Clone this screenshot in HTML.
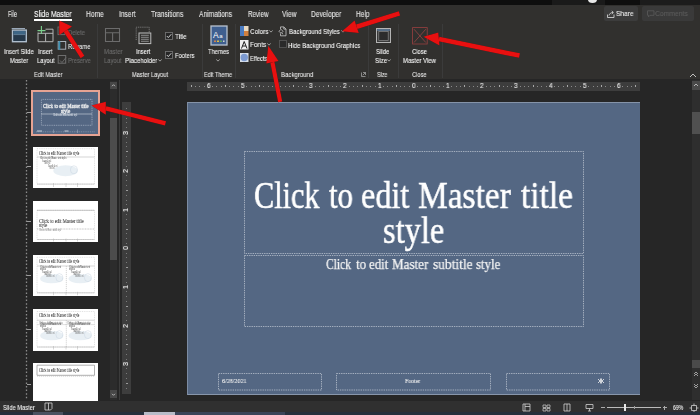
<!DOCTYPE html>
<html><head><meta charset="utf-8">
<style>
*{margin:0;padding:0;box-sizing:border-box}
html,body{width:700px;height:415px;overflow:hidden;background:#262626;position:relative;font-family:"Liberation Sans",sans-serif}
.a{position:absolute}
.t{position:absolute;white-space:nowrap;transform-origin:0 0;-webkit-text-stroke:0.12px currentColor;will-change:transform}
svg{position:absolute;overflow:visible}
.n{-webkit-text-stroke:0}
.sep{position:absolute;top:24px;width:1px;height:54px;background:#3b3b3b}
</style></head><body>
<div class="a" style="left:0;top:0;width:700px;height:5px;background:#0e0e0e"></div>
<div class="a" style="left:552px;top:0;width:53px;height:5px;background:#1a1a1a"></div>
<div class="a" style="left:640px;top:0;width:60px;height:5px;background:#1c1c1c"></div>
<div class="a" style="left:588px;top:-4px;width:9px;height:7px;border-radius:50%;background:#e8e8e8"></div>
<div class="a" style="left:0;top:5px;width:700px;height:74px;background:#31302e"></div>
<div class="a" style="left:34px;top:19.3px;width:38px;height:1.8px;background:#fff"></div>
<div class="a" style="left:603.6px;top:6px;width:34.8px;height:15px;background:#3c3c3c;border-radius:2px"></div>
<div class="a" style="left:642px;top:6px;width:51.6px;height:15px;background:#3a3a3a;border-radius:2px"></div>
<svg style="left:607px;top:10px" width="8" height="8" viewBox="0 0 8 8"><path d="M0.5 4.5v3h6.5v-3M2 5.5c0.5-2 2-3 4-3M4.8 1l1.6 1.5-1.6 1.5" fill="none" stroke="#e0e0e0" stroke-width="0.8"/></svg>
<svg style="left:647px;top:10px" width="8" height="8" viewBox="0 0 8 8"><path d="M0.5 0.8h6.5v4.5h-4l-1.5 1.5v-1.5h-1z" fill="none" stroke="#5a5a5a" stroke-width="0.8"/></svg>
<div class="sep" style="left:97px"></div>
<div class="sep" style="left:202px"></div>
<div class="sep" style="left:235px"></div>
<div class="sep" style="left:368px"></div>
<div class="sep" style="left:398px"></div>
<div class="sep" style="left:442px"></div>
<svg style="left:11px;top:27px" width="17" height="16" viewBox="0 0 17 16"><line x1="0.7" y1="1.5" x2="14" y2="1.5" stroke="#9aa8b8" stroke-width="1"/><rect x="1.5" y="3.1" width="13.8" height="11.6" fill="#25384a" stroke="#aebdcc" stroke-width="1.4"/><rect x="2.5" y="4" width="11.8" height="3.5" fill="#3e6686"/><line x1="2.5" y1="7.6" x2="14.3" y2="7.6" stroke="#7f9ab0" stroke-width="0.6"/></svg>
<svg style="left:36px;top:25px" width="19" height="18" viewBox="0 0 19 18"><path d="M9.5 4.2H17V16.7H2V7.5M2 8.3H17M9.6 8.3V16.7" fill="none" stroke="#b4b4b4" stroke-width="1"/><path d="M5.4 1v8.1M1.5 5.6h8" stroke="#7ccf8c" stroke-width="1.1"/></svg>
<svg style="left:57px;top:26px" width="10" height="10" viewBox="0 0 10 10"><rect x="1" y="1" width="7" height="7.6" fill="none" stroke="#6a6a6a" stroke-width="1"/></svg>
<svg style="left:57px;top:40px" width="11" height="11" viewBox="0 0 11 11"><rect x="1.2" y="1.5" width="7.5" height="7.7" fill="none" stroke="#a8b0b8" stroke-width="1"/><path d="M2.4 1.2v8.5" stroke="#3b8fb0" stroke-width="1.8"/></svg>
<svg style="left:57px;top:54px" width="11" height="11" viewBox="0 0 11 11"><rect x="1.2" y="1.5" width="7.5" height="7.7" fill="none" stroke="#6e6e6e" stroke-width="1"/><path d="M3 6.5l2 2 4-5" fill="none" stroke="#6e6e6e" stroke-width="0.9"/></svg>
<svg style="left:104px;top:27px" width="17" height="16" viewBox="0 0 17 16"><path d="M1.5 1.5H15.5V14.5H1.5ZM1.5 5.8H15.5M8.6 5.8V14.5" fill="none" stroke="#6c6c6c" stroke-width="1.1"/></svg>
<svg style="left:135px;top:26px" width="17" height="19" viewBox="0 0 17 19"><path d="M1.2 14V1.2H14.2V6.5" fill="none" stroke="#8c8c8c" stroke-width="0.8" stroke-dasharray="1.2 0.9"/><rect x="4" y="7" width="11.8" height="10.6" fill="#31302e" stroke="#bdbdbd" stroke-width="1"/><path d="M6 9.3h7.8M6 11.3h7.8M6 13.3h7.8M6 15.3h7.8" stroke="#8a8a8a" stroke-width="1"/></svg>
<svg style="left:164.5px;top:32.2px" width="8" height="8" viewBox="0 0 8 8"><rect x="0.5" y="0.5" width="7" height="7" fill="#262626" stroke="#707070" stroke-width="0.9"/><path d="M1.8 4l1.5 1.6 3-3.4" fill="none" stroke="#e0e0e0" stroke-width="0.9"/></svg>
<svg style="left:164.5px;top:51px" width="8" height="8" viewBox="0 0 8 8"><rect x="0.5" y="0.5" width="7" height="7" fill="#262626" stroke="#707070" stroke-width="0.9"/><path d="M1.8 4l1.5 1.6 3-3.4" fill="none" stroke="#e0e0e0" stroke-width="0.9"/></svg>
<svg style="left:158px;top:59.2px" width="4" height="3" viewBox="0 0 4 3"><path d="M0.3 0.5l1.7 1.6 1.7-1.6" fill="none" stroke="#d0d0d0" stroke-width="0.7"/></svg>
<svg style="left:209.5px;top:25px" width="18" height="21" viewBox="0 0 18 21"><rect x="1" y="1" width="16" height="19" fill="#3f5f8f" stroke="#b9c3cf" stroke-width="1.3"/><text x="3" y="13" font-family="Liberation Sans" font-size="8.5" fill="#ffffff">A</text><text x="9.2" y="13" font-family="Liberation Sans" font-size="6" fill="#ffffff">a</text><rect x="4" y="15.5" width="2" height="1.5" fill="#d08050"/><rect x="7" y="15.5" width="2" height="1.5" fill="#e0c040"/><rect x="10" y="15.5" width="2" height="1.5" fill="#60a060"/><rect x="13" y="15.5" width="1.5" height="1.5" fill="#d0d0d0"/></svg>
<svg style="left:216px;top:59px" width="4" height="3" viewBox="0 0 4 3"><path d="M0.3 0.5l1.7 1.6 1.7-1.6" fill="none" stroke="#d0d0d0" stroke-width="0.7"/></svg>
<svg style="left:240px;top:26px" width="9" height="10" viewBox="0 0 9 10"><rect x="0" y="0" width="4" height="10" fill="#4a7ac0"/><rect x="4" y="0" width="4.5" height="5" fill="#e8d8c0"/><rect x="4" y="5" width="4.5" height="5" fill="#d08040"/></svg>
<svg style="left:269px;top:30.3px" width="4" height="3" viewBox="0 0 4 3"><path d="M0.3 0.5l1.7 1.6 1.7-1.6" fill="none" stroke="#d0d0d0" stroke-width="0.7"/></svg>
<svg style="left:240px;top:39.5px" width="9" height="10" viewBox="0 0 9 10"><rect x="0" y="0" width="8.5" height="9.5" fill="#f0f0f0"/><path d="M1.5 8.5L4.2 1.5L7 8.5M2.6 6h3.3" fill="none" stroke="#202020" stroke-width="1"/></svg>
<svg style="left:267px;top:43.3px" width="4" height="3" viewBox="0 0 4 3"><path d="M0.3 0.5l1.7 1.6 1.7-1.6" fill="none" stroke="#d0d0d0" stroke-width="0.7"/></svg>
<svg style="left:240px;top:53px" width="9" height="10" viewBox="0 0 9 10"><rect x="0" y="0" width="8.5" height="9" fill="#d8e0ea"/><circle cx="4.25" cy="4.5" r="3.7" fill="#7c9ad0"/></svg>
<svg style="left:278px;top:25.5px" width="9" height="11" viewBox="0 0 9 11"><path d="M2.5 3V0.9H5.8L8 3.1V9.8H2.5V7.5M5.8 0.9V3.1H8" fill="none" stroke="#c8c8c8" stroke-width="0.8"/><path d="M1 5.3l2-2 2 2-2 2z" fill="none" stroke="#c8c8c8" stroke-width="0.8"/><path d="M4.2 6.8l0.6 1.5" stroke="#c8c8c8" stroke-width="0.7"/></svg>
<svg style="left:340.5px;top:30.3px" width="4" height="3" viewBox="0 0 4 3"><path d="M0.3 0.5l1.7 1.6 1.7-1.6" fill="none" stroke="#d0d0d0" stroke-width="0.7"/></svg>
<svg style="left:278.5px;top:40px" width="8" height="8" viewBox="0 0 8 8"><rect x="0.5" y="0.5" width="7" height="7" fill="#2a2a2a" stroke="#555555" stroke-width="0.9"/></svg>
<svg style="left:361px;top:71.5px" width="5" height="5" viewBox="0 0 5 5"><path d="M0.5 0.5v4h4M2 0.5h2.5v2.5M1.8 3.2l2.7-2.7" fill="none" stroke="#b0b0b0" stroke-width="0.7"/></svg>
<svg style="left:375px;top:27px" width="17" height="17" viewBox="0 0 17 17"><rect x="1.5" y="1.5" width="14" height="14" fill="#3a3a3a" stroke="#b4b4b4" stroke-width="1"/><rect x="2.2" y="2.2" width="12.6" height="1.6" fill="#5f7c9a"/><rect x="3.8" y="4.5" width="9.4" height="9" fill="#2c2c2c" stroke="#8c8c8c" stroke-width="0.7"/></svg>
<svg style="left:386.5px;top:59px" width="4" height="3" viewBox="0 0 4 3"><path d="M0.3 0.5l1.7 1.6 1.7-1.6" fill="none" stroke="#d0d0d0" stroke-width="0.7"/></svg>
<svg style="left:411.5px;top:26.5px" width="16" height="18" viewBox="0 0 16 18"><rect x="0.6" y="0.6" width="14.6" height="16.4" fill="none" stroke="#9a4040" stroke-width="0.8"/><path d="M2 2.2L13.8 15.5M13.8 2.2L2 15.5" stroke="#a84848" stroke-width="0.7"/></svg>
<svg style="left:689px;top:73px" width="8" height="5" viewBox="0 0 8 5"><path d="M1 4l3-3 3 3" fill="none" stroke="#d0d0d0" stroke-width="0.9"/></svg>
<svg style="left:24px;top:80px" width="4" height="320" viewBox="0 0 4 320"><line x1="2.5" y1="0" x2="2.5" y2="320" stroke="#8c8c8c" stroke-width="1.3" stroke-dasharray="1.5 2.1"/></svg>
<div class="a" style="left:27px;top:112.0px;width:4px;height:1px;background:#9a9a9a"></div>
<div class="a" style="left:27px;top:166.3px;width:4px;height:1px;background:#9a9a9a"></div>
<div class="a" style="left:27px;top:220.5px;width:4px;height:1px;background:#9a9a9a"></div>
<div class="a" style="left:27px;top:274.9px;width:4px;height:1px;background:#9a9a9a"></div>
<div class="a" style="left:27px;top:328.5px;width:4px;height:1px;background:#9a9a9a"></div>
<div class="a" style="left:27px;top:383.5px;width:4px;height:1px;background:#9a9a9a"></div>
<div class="a" style="left:31px;top:89.8px;width:69px;height:45.9px;background:#e6a393"></div>
<div class="a" style="left:33.2px;top:92px;width:65.3px;height:41.9px;background:#546783"></div>
<svg style="left:0;top:0" width="1" height="1"><rect x="41.4" y="99.4" width="50.6" height="25.89999999999999" fill="none" stroke="#c0cad8" stroke-width="0.6" stroke-dasharray="1 0.8"/></svg>
<svg style="left:0;top:0" width="1" height="1"><line x1="41.4" y1="114" x2="92" y2="114" stroke="#dde3ea" stroke-width="0.9" stroke-dasharray="1.2 0.8"/></svg>
<svg style="left:0;top:0" width="1" height="1"><line x1="36" y1="131.8" x2="95" y2="131.8" stroke="#aab6c6" stroke-width="0.5" stroke-dasharray="1 0.8"/></svg>
<svg style="left:0;top:0" width="1" height="1"><line x1="53.5" y1="129.5" x2="53.5" y2="133" stroke="#aab6c6" stroke-width="0.5"/></svg>
<svg style="left:0;top:0" width="1" height="1"><line x1="77.5" y1="129.5" x2="77.5" y2="133" stroke="#aab6c6" stroke-width="0.5"/></svg>
<svg style="left:0;top:0" width="1" height="1"><line x1="37" y1="131" x2="42" y2="131" stroke="#e0e6ee" stroke-width="0.8"/></svg>
<svg style="left:0;top:0" width="1" height="1"><line x1="64.5" y1="131" x2="68.5" y2="131" stroke="#e0e6ee" stroke-width="0.8"/></svg>
<div class="a" style="left:33px;top:146.5px;width:65px;height:41.19999999999999px;background:#ffffff"></div>
<div class="a" style="left:33px;top:200.9px;width:65px;height:41.099999999999994px;background:#ffffff"></div>
<div class="a" style="left:33px;top:254.8px;width:65px;height:41.599999999999966px;background:#ffffff"></div>
<div class="a" style="left:33px;top:309px;width:65px;height:41.60000000000002px;background:#ffffff"></div>
<div class="a" style="left:33px;top:363.3px;width:65px;height:40.69999999999999px;background:#ffffff"></div>
<svg style="left:0;top:0" width="1" height="1"><rect x="37" y="148.7" width="57.5" height="35.400000000000006" fill="none" stroke="#c4c4c4" stroke-width="0.5" stroke-dasharray="1 0.8"/></svg>
<svg style="left:0;top:0" width="1" height="1"><line x1="37" y1="157" x2="94.5" y2="157" stroke="#a8a8a8" stroke-width="0.5"/></svg>
<svg style="left:0;top:0" width="1" height="1"><ellipse cx="65.6" cy="170.75" rx="12.300000000000004" ry="5.449999999999989" fill="#e6edf3" opacity="0.9"/><ellipse cx="73.9" cy="169.75" rx="3.5" ry="4" fill="none" stroke="#c8d4e0" stroke-width="0.5"/></svg>
<svg style="left:0;top:0" width="1" height="1"><line x1="37" y1="184.1" x2="94.5" y2="184.1" stroke="#a8a8a8" stroke-width="0.5"/></svg>
<svg style="left:0;top:0" width="1" height="1"><line x1="53.5" y1="183" x2="53.5" y2="187" stroke="#b0b0b0" stroke-width="0.5"/></svg>
<svg style="left:0;top:0" width="1" height="1"><line x1="66" y1="183" x2="66" y2="187" stroke="#b0b0b0" stroke-width="0.5"/></svg>
<svg style="left:0;top:0" width="1" height="1"><line x1="77.5" y1="183" x2="77.5" y2="187" stroke="#b0b0b0" stroke-width="0.5"/></svg>
<svg style="left:0;top:0" width="1" height="1"><rect x="37" y="210.3" width="57.5" height="29.19999999999999" fill="none" stroke="#c4c4c4" stroke-width="0.5" stroke-dasharray="1 0.8"/></svg>
<svg style="left:0;top:0" width="1" height="1"><line x1="37" y1="210.3" x2="94.5" y2="210.3" stroke="#909090" stroke-width="0.5"/></svg>
<svg style="left:0;top:0" width="1" height="1"><line x1="37" y1="229" x2="94.5" y2="229" stroke="#8a8a8a" stroke-width="0.5" stroke-dasharray="1 0.6"/></svg>
<svg style="left:0;top:0" width="1" height="1"><line x1="37" y1="239.5" x2="94.5" y2="239.5" stroke="#a8a8a8" stroke-width="0.5"/></svg>
<svg style="left:0;top:0" width="1" height="1"><line x1="53.5" y1="238.5" x2="53.5" y2="241.5" stroke="#b0b0b0" stroke-width="0.5"/></svg>
<svg style="left:0;top:0" width="1" height="1"><line x1="66" y1="238.5" x2="66" y2="241.5" stroke="#b0b0b0" stroke-width="0.5"/></svg>
<svg style="left:0;top:0" width="1" height="1"><line x1="77.5" y1="238.5" x2="77.5" y2="241.5" stroke="#b0b0b0" stroke-width="0.5"/></svg>
<svg style="left:0;top:0" width="1" height="1"><rect x="37" y="257.3" width="57.5" height="35.5" fill="none" stroke="#c4c4c4" stroke-width="0.5" stroke-dasharray="1 0.8"/></svg>
<svg style="left:0;top:0" width="1" height="1"><line x1="37" y1="266.0" x2="94.5" y2="266.0" stroke="#a8a8a8" stroke-width="0.5"/></svg>
<svg style="left:0;top:0" width="1" height="1"><line x1="66.3" y1="266.0" x2="66.3" y2="292.8" stroke="#a8a8a8" stroke-width="0.5" stroke-dasharray="1.2 0.8"/></svg>
<svg style="left:0;top:0" width="1" height="1"><ellipse cx="51.7" cy="278.65" rx="11.7" ry="4.650000000000006" fill="#e6edf3" opacity="0.9"/><ellipse cx="59.4" cy="277.65" rx="3.5" ry="4" fill="none" stroke="#c8d4e0" stroke-width="0.5"/></svg>
<svg style="left:0;top:0" width="1" height="1"><ellipse cx="80.2" cy="278.65" rx="11.700000000000003" ry="4.650000000000006" fill="#e6edf3" opacity="0.9"/><ellipse cx="87.9" cy="277.65" rx="3.5" ry="4" fill="none" stroke="#c8d4e0" stroke-width="0.5"/></svg>
<svg style="left:0;top:0" width="1" height="1"><line x1="37" y1="292.8" x2="94.5" y2="292.8" stroke="#a8a8a8" stroke-width="0.5"/></svg>
<svg style="left:0;top:0" width="1" height="1"><line x1="53.5" y1="291.8" x2="53.5" y2="295.3" stroke="#b0b0b0" stroke-width="0.5"/></svg>
<svg style="left:0;top:0" width="1" height="1"><line x1="66" y1="291.8" x2="66" y2="295.3" stroke="#b0b0b0" stroke-width="0.5"/></svg>
<svg style="left:0;top:0" width="1" height="1"><line x1="77.5" y1="291.8" x2="77.5" y2="295.3" stroke="#b0b0b0" stroke-width="0.5"/></svg>
<svg style="left:0;top:0" width="1" height="1"><rect x="37" y="311.5" width="57.5" height="35.5" fill="none" stroke="#c4c4c4" stroke-width="0.5" stroke-dasharray="1 0.8"/></svg>
<svg style="left:0;top:0" width="1" height="1"><line x1="37" y1="320.2" x2="94.5" y2="320.2" stroke="#a8a8a8" stroke-width="0.5"/></svg>
<svg style="left:0;top:0" width="1" height="1"><line x1="66.3" y1="320.2" x2="66.3" y2="347" stroke="#a8a8a8" stroke-width="0.5" stroke-dasharray="1.2 0.8"/></svg>
<svg style="left:0;top:0" width="1" height="1"><line x1="37" y1="324.6" x2="66" y2="324.6" stroke="#c0c0c0" stroke-width="0.5"/></svg>
<svg style="left:0;top:0" width="1" height="1"><ellipse cx="51.7" cy="335.65" rx="11.7" ry="4.650000000000006" fill="#e6edf3" opacity="0.9"/><ellipse cx="59.4" cy="334.65" rx="3.5" ry="4" fill="none" stroke="#c8d4e0" stroke-width="0.5"/></svg>
<svg style="left:0;top:0" width="1" height="1"><line x1="65.5" y1="324.6" x2="94.5" y2="324.6" stroke="#c0c0c0" stroke-width="0.5"/></svg>
<svg style="left:0;top:0" width="1" height="1"><ellipse cx="80.2" cy="335.65" rx="11.700000000000003" ry="4.650000000000006" fill="#e6edf3" opacity="0.9"/><ellipse cx="87.9" cy="334.65" rx="3.5" ry="4" fill="none" stroke="#c8d4e0" stroke-width="0.5"/></svg>
<svg style="left:0;top:0" width="1" height="1"><line x1="37" y1="347" x2="94.5" y2="347" stroke="#a8a8a8" stroke-width="0.5"/></svg>
<svg style="left:0;top:0" width="1" height="1"><line x1="53.5" y1="346" x2="53.5" y2="349.5" stroke="#b0b0b0" stroke-width="0.5"/></svg>
<svg style="left:0;top:0" width="1" height="1"><line x1="66" y1="346" x2="66" y2="349.5" stroke="#b0b0b0" stroke-width="0.5"/></svg>
<svg style="left:0;top:0" width="1" height="1"><line x1="77.5" y1="346" x2="77.5" y2="349.5" stroke="#b0b0b0" stroke-width="0.5"/></svg>
<svg style="left:0;top:0" width="1" height="1"><rect x="37" y="365.2" width="57.5" height="10.100000000000023" fill="none" stroke="#7a7a7a" stroke-width="0.6" stroke-dasharray="100 0"/></svg>
<svg style="left:0;top:0" width="1" height="1"><line x1="37" y1="376.2" x2="94.5" y2="376.2" stroke="#b0b0b0" stroke-width="0.5" stroke-dasharray="1.2 0.8"/></svg>
<div class="a" style="left:110px;top:81px;width:7px;height:319px;background:#2c2c2c"></div>
<div class="a" style="left:110px;top:82px;width:7px;height:7px;background:#474747"></div>
<svg style="left:111px;top:83px" width="5" height="5" viewBox="0 0 5 5"><path d="M1 3.2l1.5-1.5 1.5 1.5" fill="none" stroke="#cfcfcf" stroke-width="0.8"/></svg>
<div class="a" style="left:110px;top:117.5px;width:7px;height:142.5px;background:#4c4c4c"></div>
<div class="a" style="left:110px;top:390px;width:7px;height:8px;background:#474747"></div>
<svg style="left:111px;top:391.5px" width="5" height="5" viewBox="0 0 5 5"><path d="M1 1.8l1.5 1.5 1.5-1.5" fill="none" stroke="#cfcfcf" stroke-width="0.8"/></svg>
<div class="a" style="left:119px;top:80px;width:1px;height:320px;background:#3c3c3c"></div>
<div class="a" style="left:122px;top:102px;width:9px;height:292px;background:#3d3d3d"></div>
<div class="a" style="left:126px;top:107.88px;width:1px;height:1px;background:#7a7a7a"></div><div class="a" style="left:125.5px;top:112.70px;width:2px;height:1px;background:#9a9a9a"></div><div class="a" style="left:126px;top:117.53px;width:1px;height:1px;background:#7a7a7a"></div><div class="a" style="left:126px;top:122.35px;width:1px;height:1px;background:#7a7a7a"></div><div class="a" style="left:126px;top:127.18px;width:1px;height:1px;background:#7a7a7a"></div><div class="a" style="left:126px;top:136.82px;width:1px;height:1px;background:#7a7a7a"></div><div class="a" style="left:126px;top:141.65px;width:1px;height:1px;background:#7a7a7a"></div><div class="a" style="left:126px;top:146.48px;width:1px;height:1px;background:#7a7a7a"></div><div class="a" style="left:125.5px;top:151.30px;width:2px;height:1px;background:#9a9a9a"></div><div class="a" style="left:126px;top:156.12px;width:1px;height:1px;background:#7a7a7a"></div><div class="a" style="left:126px;top:160.95px;width:1px;height:1px;background:#7a7a7a"></div><div class="a" style="left:126px;top:165.78px;width:1px;height:1px;background:#7a7a7a"></div><div class="a" style="left:126px;top:175.43px;width:1px;height:1px;background:#7a7a7a"></div><div class="a" style="left:126px;top:180.25px;width:1px;height:1px;background:#7a7a7a"></div><div class="a" style="left:126px;top:185.08px;width:1px;height:1px;background:#7a7a7a"></div><div class="a" style="left:125.5px;top:189.90px;width:2px;height:1px;background:#9a9a9a"></div><div class="a" style="left:126px;top:194.73px;width:1px;height:1px;background:#7a7a7a"></div><div class="a" style="left:126px;top:199.55px;width:1px;height:1px;background:#7a7a7a"></div><div class="a" style="left:126px;top:204.38px;width:1px;height:1px;background:#7a7a7a"></div><div class="a" style="left:126px;top:214.03px;width:1px;height:1px;background:#7a7a7a"></div><div class="a" style="left:126px;top:218.85px;width:1px;height:1px;background:#7a7a7a"></div><div class="a" style="left:126px;top:223.68px;width:1px;height:1px;background:#7a7a7a"></div><div class="a" style="left:125.5px;top:228.50px;width:2px;height:1px;background:#9a9a9a"></div><div class="a" style="left:126px;top:233.33px;width:1px;height:1px;background:#7a7a7a"></div><div class="a" style="left:126px;top:238.15px;width:1px;height:1px;background:#7a7a7a"></div><div class="a" style="left:126px;top:242.98px;width:1px;height:1px;background:#7a7a7a"></div><div class="a" style="left:126px;top:252.62px;width:1px;height:1px;background:#7a7a7a"></div><div class="a" style="left:126px;top:257.45px;width:1px;height:1px;background:#7a7a7a"></div><div class="a" style="left:126px;top:262.28px;width:1px;height:1px;background:#7a7a7a"></div><div class="a" style="left:125.5px;top:267.10px;width:2px;height:1px;background:#9a9a9a"></div><div class="a" style="left:126px;top:271.93px;width:1px;height:1px;background:#7a7a7a"></div><div class="a" style="left:126px;top:276.75px;width:1px;height:1px;background:#7a7a7a"></div><div class="a" style="left:126px;top:281.57px;width:1px;height:1px;background:#7a7a7a"></div><div class="a" style="left:126px;top:291.23px;width:1px;height:1px;background:#7a7a7a"></div><div class="a" style="left:126px;top:296.05px;width:1px;height:1px;background:#7a7a7a"></div><div class="a" style="left:126px;top:300.88px;width:1px;height:1px;background:#7a7a7a"></div><div class="a" style="left:125.5px;top:305.70px;width:2px;height:1px;background:#9a9a9a"></div><div class="a" style="left:126px;top:310.53px;width:1px;height:1px;background:#7a7a7a"></div><div class="a" style="left:126px;top:315.35px;width:1px;height:1px;background:#7a7a7a"></div><div class="a" style="left:126px;top:320.18px;width:1px;height:1px;background:#7a7a7a"></div><div class="a" style="left:126px;top:329.83px;width:1px;height:1px;background:#7a7a7a"></div><div class="a" style="left:126px;top:334.65px;width:1px;height:1px;background:#7a7a7a"></div><div class="a" style="left:126px;top:339.48px;width:1px;height:1px;background:#7a7a7a"></div><div class="a" style="left:125.5px;top:344.30px;width:2px;height:1px;background:#9a9a9a"></div><div class="a" style="left:126px;top:349.12px;width:1px;height:1px;background:#7a7a7a"></div><div class="a" style="left:126px;top:353.95px;width:1px;height:1px;background:#7a7a7a"></div><div class="a" style="left:126px;top:358.78px;width:1px;height:1px;background:#7a7a7a"></div><div class="a" style="left:126px;top:368.43px;width:1px;height:1px;background:#7a7a7a"></div><div class="a" style="left:126px;top:373.25px;width:1px;height:1px;background:#7a7a7a"></div><div class="a" style="left:126px;top:378.08px;width:1px;height:1px;background:#7a7a7a"></div><div class="a" style="left:125.5px;top:382.90px;width:2px;height:1px;background:#9a9a9a"></div><div class="a" style="left:126px;top:387.73px;width:1px;height:1px;background:#7a7a7a"></div>
<div class="a" style="left:120.6px;top:127.5px;width:10px;height:10px;line-height:10px;text-align:center;font-size:7.5px;color:#e8e8e8;transform:rotate(-90deg) scaleX(0.85);-webkit-text-stroke:0.2px #e8e8e8;will-change:transform">3</div>
<div class="a" style="left:120.6px;top:166.10000000000002px;width:10px;height:10px;line-height:10px;text-align:center;font-size:7.5px;color:#e8e8e8;transform:rotate(-90deg) scaleX(0.85);-webkit-text-stroke:0.2px #e8e8e8;will-change:transform">2</div>
<div class="a" style="left:120.6px;top:204.70000000000002px;width:10px;height:10px;line-height:10px;text-align:center;font-size:7.5px;color:#e8e8e8;transform:rotate(-90deg) scaleX(0.85);-webkit-text-stroke:0.2px #e8e8e8;will-change:transform">1</div>
<div class="a" style="left:120.6px;top:243.3px;width:10px;height:10px;line-height:10px;text-align:center;font-size:7.5px;color:#e8e8e8;transform:rotate(-90deg) scaleX(0.85);-webkit-text-stroke:0.2px #e8e8e8;will-change:transform">0</div>
<div class="a" style="left:120.6px;top:281.90000000000003px;width:10px;height:10px;line-height:10px;text-align:center;font-size:7.5px;color:#e8e8e8;transform:rotate(-90deg) scaleX(0.85);-webkit-text-stroke:0.2px #e8e8e8;will-change:transform">1</div>
<div class="a" style="left:120.6px;top:320.5px;width:10px;height:10px;line-height:10px;text-align:center;font-size:7.5px;color:#e8e8e8;transform:rotate(-90deg) scaleX(0.85);-webkit-text-stroke:0.2px #e8e8e8;will-change:transform">2</div>
<div class="a" style="left:120.6px;top:359.1px;width:10px;height:10px;line-height:10px;text-align:center;font-size:7.5px;color:#e8e8e8;transform:rotate(-90deg) scaleX(0.85);-webkit-text-stroke:0.2px #e8e8e8;will-change:transform">3</div>
<div class="a" style="left:187px;top:81.5px;width:453px;height:9.4px;background:#3d3d3d"></div>
<div class="a" style="left:190.70px;top:85px;width:1px;height:2px;background:#a8a8a8"></div><div class="a" style="left:194.97px;top:85.6px;width:1px;height:1px;background:#8a8a8a"></div><div class="a" style="left:199.25px;top:85.6px;width:1px;height:1px;background:#8a8a8a"></div><div class="a" style="left:203.52px;top:85.6px;width:1px;height:1px;background:#8a8a8a"></div><div class="a" style="left:212.07px;top:85.6px;width:1px;height:1px;background:#8a8a8a"></div><div class="a" style="left:216.35px;top:85.6px;width:1px;height:1px;background:#8a8a8a"></div><div class="a" style="left:220.62px;top:85.6px;width:1px;height:1px;background:#8a8a8a"></div><div class="a" style="left:224.90px;top:85px;width:1px;height:2px;background:#a8a8a8"></div><div class="a" style="left:229.17px;top:85.6px;width:1px;height:1px;background:#8a8a8a"></div><div class="a" style="left:233.45px;top:85.6px;width:1px;height:1px;background:#8a8a8a"></div><div class="a" style="left:237.72px;top:85.6px;width:1px;height:1px;background:#8a8a8a"></div><div class="a" style="left:246.27px;top:85.6px;width:1px;height:1px;background:#8a8a8a"></div><div class="a" style="left:250.55px;top:85.6px;width:1px;height:1px;background:#8a8a8a"></div><div class="a" style="left:254.82px;top:85.6px;width:1px;height:1px;background:#8a8a8a"></div><div class="a" style="left:259.10px;top:85px;width:1px;height:2px;background:#a8a8a8"></div><div class="a" style="left:263.38px;top:85.6px;width:1px;height:1px;background:#8a8a8a"></div><div class="a" style="left:267.65px;top:85.6px;width:1px;height:1px;background:#8a8a8a"></div><div class="a" style="left:271.92px;top:85.6px;width:1px;height:1px;background:#8a8a8a"></div><div class="a" style="left:280.48px;top:85.6px;width:1px;height:1px;background:#8a8a8a"></div><div class="a" style="left:284.75px;top:85.6px;width:1px;height:1px;background:#8a8a8a"></div><div class="a" style="left:289.02px;top:85.6px;width:1px;height:1px;background:#8a8a8a"></div><div class="a" style="left:293.30px;top:85px;width:1px;height:2px;background:#a8a8a8"></div><div class="a" style="left:297.57px;top:85.6px;width:1px;height:1px;background:#8a8a8a"></div><div class="a" style="left:301.85px;top:85.6px;width:1px;height:1px;background:#8a8a8a"></div><div class="a" style="left:306.12px;top:85.6px;width:1px;height:1px;background:#8a8a8a"></div><div class="a" style="left:314.68px;top:85.6px;width:1px;height:1px;background:#8a8a8a"></div><div class="a" style="left:318.95px;top:85.6px;width:1px;height:1px;background:#8a8a8a"></div><div class="a" style="left:323.23px;top:85.6px;width:1px;height:1px;background:#8a8a8a"></div><div class="a" style="left:327.50px;top:85px;width:1px;height:2px;background:#a8a8a8"></div><div class="a" style="left:331.77px;top:85.6px;width:1px;height:1px;background:#8a8a8a"></div><div class="a" style="left:336.05px;top:85.6px;width:1px;height:1px;background:#8a8a8a"></div><div class="a" style="left:340.32px;top:85.6px;width:1px;height:1px;background:#8a8a8a"></div><div class="a" style="left:348.88px;top:85.6px;width:1px;height:1px;background:#8a8a8a"></div><div class="a" style="left:353.15px;top:85.6px;width:1px;height:1px;background:#8a8a8a"></div><div class="a" style="left:357.43px;top:85.6px;width:1px;height:1px;background:#8a8a8a"></div><div class="a" style="left:361.70px;top:85px;width:1px;height:2px;background:#a8a8a8"></div><div class="a" style="left:365.98px;top:85.6px;width:1px;height:1px;background:#8a8a8a"></div><div class="a" style="left:370.25px;top:85.6px;width:1px;height:1px;background:#8a8a8a"></div><div class="a" style="left:374.52px;top:85.6px;width:1px;height:1px;background:#8a8a8a"></div><div class="a" style="left:383.07px;top:85.6px;width:1px;height:1px;background:#8a8a8a"></div><div class="a" style="left:387.35px;top:85.6px;width:1px;height:1px;background:#8a8a8a"></div><div class="a" style="left:391.62px;top:85.6px;width:1px;height:1px;background:#8a8a8a"></div><div class="a" style="left:395.90px;top:85px;width:1px;height:2px;background:#a8a8a8"></div><div class="a" style="left:400.18px;top:85.6px;width:1px;height:1px;background:#8a8a8a"></div><div class="a" style="left:404.45px;top:85.6px;width:1px;height:1px;background:#8a8a8a"></div><div class="a" style="left:408.73px;top:85.6px;width:1px;height:1px;background:#8a8a8a"></div><div class="a" style="left:417.27px;top:85.6px;width:1px;height:1px;background:#8a8a8a"></div><div class="a" style="left:421.55px;top:85.6px;width:1px;height:1px;background:#8a8a8a"></div><div class="a" style="left:425.82px;top:85.6px;width:1px;height:1px;background:#8a8a8a"></div><div class="a" style="left:430.10px;top:85px;width:1px;height:2px;background:#a8a8a8"></div><div class="a" style="left:434.38px;top:85.6px;width:1px;height:1px;background:#8a8a8a"></div><div class="a" style="left:438.65px;top:85.6px;width:1px;height:1px;background:#8a8a8a"></div><div class="a" style="left:442.93px;top:85.6px;width:1px;height:1px;background:#8a8a8a"></div><div class="a" style="left:451.48px;top:85.6px;width:1px;height:1px;background:#8a8a8a"></div><div class="a" style="left:455.75px;top:85.6px;width:1px;height:1px;background:#8a8a8a"></div><div class="a" style="left:460.02px;top:85.6px;width:1px;height:1px;background:#8a8a8a"></div><div class="a" style="left:464.30px;top:85px;width:1px;height:2px;background:#a8a8a8"></div><div class="a" style="left:468.57px;top:85.6px;width:1px;height:1px;background:#8a8a8a"></div><div class="a" style="left:472.85px;top:85.6px;width:1px;height:1px;background:#8a8a8a"></div><div class="a" style="left:477.12px;top:85.6px;width:1px;height:1px;background:#8a8a8a"></div><div class="a" style="left:485.68px;top:85.6px;width:1px;height:1px;background:#8a8a8a"></div><div class="a" style="left:489.95px;top:85.6px;width:1px;height:1px;background:#8a8a8a"></div><div class="a" style="left:494.23px;top:85.6px;width:1px;height:1px;background:#8a8a8a"></div><div class="a" style="left:498.50px;top:85px;width:1px;height:2px;background:#a8a8a8"></div><div class="a" style="left:502.77px;top:85.6px;width:1px;height:1px;background:#8a8a8a"></div><div class="a" style="left:507.05px;top:85.6px;width:1px;height:1px;background:#8a8a8a"></div><div class="a" style="left:511.32px;top:85.6px;width:1px;height:1px;background:#8a8a8a"></div><div class="a" style="left:519.88px;top:85.6px;width:1px;height:1px;background:#8a8a8a"></div><div class="a" style="left:524.15px;top:85.6px;width:1px;height:1px;background:#8a8a8a"></div><div class="a" style="left:528.42px;top:85.6px;width:1px;height:1px;background:#8a8a8a"></div><div class="a" style="left:532.70px;top:85px;width:1px;height:2px;background:#a8a8a8"></div><div class="a" style="left:536.98px;top:85.6px;width:1px;height:1px;background:#8a8a8a"></div><div class="a" style="left:541.25px;top:85.6px;width:1px;height:1px;background:#8a8a8a"></div><div class="a" style="left:545.52px;top:85.6px;width:1px;height:1px;background:#8a8a8a"></div><div class="a" style="left:554.08px;top:85.6px;width:1px;height:1px;background:#8a8a8a"></div><div class="a" style="left:558.35px;top:85.6px;width:1px;height:1px;background:#8a8a8a"></div><div class="a" style="left:562.62px;top:85.6px;width:1px;height:1px;background:#8a8a8a"></div><div class="a" style="left:566.90px;top:85px;width:1px;height:2px;background:#a8a8a8"></div><div class="a" style="left:571.17px;top:85.6px;width:1px;height:1px;background:#8a8a8a"></div><div class="a" style="left:575.45px;top:85.6px;width:1px;height:1px;background:#8a8a8a"></div><div class="a" style="left:579.73px;top:85.6px;width:1px;height:1px;background:#8a8a8a"></div><div class="a" style="left:588.27px;top:85.6px;width:1px;height:1px;background:#8a8a8a"></div><div class="a" style="left:592.55px;top:85.6px;width:1px;height:1px;background:#8a8a8a"></div><div class="a" style="left:596.83px;top:85.6px;width:1px;height:1px;background:#8a8a8a"></div><div class="a" style="left:601.10px;top:85px;width:1px;height:2px;background:#a8a8a8"></div><div class="a" style="left:605.38px;top:85.6px;width:1px;height:1px;background:#8a8a8a"></div><div class="a" style="left:609.65px;top:85.6px;width:1px;height:1px;background:#8a8a8a"></div><div class="a" style="left:613.92px;top:85.6px;width:1px;height:1px;background:#8a8a8a"></div><div class="a" style="left:622.48px;top:85.6px;width:1px;height:1px;background:#8a8a8a"></div><div class="a" style="left:626.75px;top:85.6px;width:1px;height:1px;background:#8a8a8a"></div><div class="a" style="left:631.02px;top:85.6px;width:1px;height:1px;background:#8a8a8a"></div><div class="a" style="left:635.30px;top:85px;width:1px;height:2px;background:#a8a8a8"></div>
<div class="a" style="left:187px;top:102px;width:453px;height:293px;background:#546783;border-top:1px solid #8593a8;border-left:1px solid #7d8ca3;border-bottom:1px solid #8896ab"></div>
<svg style="left:243.5px;top:150.5px" width="340.0" height="103.0"><rect x="0.5" y="0.5" width="339.0" height="102.0" fill="none" stroke="#c5cdd9" stroke-width="0.7" stroke-dasharray="1.4 0.9"/></svg>
<svg style="left:243.5px;top:255px" width="340.0" height="72"><rect x="0.5" y="0.5" width="339.0" height="71" fill="none" stroke="#c5cdd9" stroke-width="0.7" stroke-dasharray="1.4 0.9"/></svg>
<svg style="left:218px;top:372.5px" width="104" height="17.5"><rect x="0.5" y="0.5" width="103" height="16.5" fill="none" stroke="#c5cdd9" stroke-width="0.7" stroke-dasharray="1.4 0.9"/></svg>
<svg style="left:336px;top:372.5px" width="155" height="17.5"><rect x="0.5" y="0.5" width="154" height="16.5" fill="none" stroke="#c5cdd9" stroke-width="0.7" stroke-dasharray="1.4 0.9"/></svg>
<svg style="left:505.5px;top:372.5px" width="104.0" height="17.5"><rect x="0.5" y="0.5" width="103.0" height="16.5" fill="none" stroke="#c5cdd9" stroke-width="0.7" stroke-dasharray="1.4 0.9"/></svg>
<svg style="left:597px;top:378px" width="8" height="6" viewBox="0 0 8 6"><path d="M1 1l2 2-2 2M7 1l-2 2 2 2M3.5 0.5v5M4.5 0.5v5" fill="none" stroke="#f0f0f0" stroke-width="0.8"/></svg>
<div class="a" style="left:692px;top:80px;width:8px;height:320px;background:#2e2e2e"></div>
<div class="a" style="left:692px;top:81px;width:8px;height:9px;background:#4a4a4a"></div>
<svg style="left:693px;top:82px" width="6" height="6" viewBox="0 0 6 6"><path d="M1 4l2-2 2 2" fill="none" stroke="#cfcfcf" stroke-width="0.8"/></svg>
<div class="a" style="left:692px;top:112px;width:8px;height:22px;background:#505050"></div>
<div class="a" style="left:692px;top:360px;width:8px;height:8px;background:#4a4a4a"></div>
<svg style="left:692px;top:370px" width="8" height="20" viewBox="0 0 8 20"><path d="M2 4l2-2 2 2M2 6l2-2 2 2M2 14l2 2 2-2M2 16l2 2 2-2" fill="none" stroke="#cfcfcf" stroke-width="0.7"/></svg>
<div class="a" style="left:0;top:400.5px;width:700px;height:11.5px;background:#303030"></div>
<svg style="left:44px;top:402px" width="9" height="9" viewBox="0 0 9 9"><path d="M1 1h7v5.5l-1.5 1.5h-5.5zM4.5 1v7" fill="none" stroke="#d0d0d0" stroke-width="0.8"/></svg>
<svg style="left:522px;top:403.2px" width="9" height="9" viewBox="0 0 9 9"><path d="M1 1h7v7h-7zM3 1v7M3 3.5h5" fill="none" stroke="#d0d0d0" stroke-width="0.8"/></svg>
<svg style="left:542px;top:403.7px" width="9" height="8" viewBox="0 0 9 8"><path d="M1 1h3v2.5h-3zM5 1h3v2.5h-3zM1 4.5h3v2.5h-3zM5 4.5h3v2.5h-3z" fill="none" stroke="#d0d0d0" stroke-width="0.7"/></svg>
<svg style="left:563px;top:403.2px" width="8" height="9" viewBox="0 0 8 9"><path d="M1 1h6v7h-6zM4 1v7" fill="none" stroke="#d0d0d0" stroke-width="0.8"/></svg>
<svg style="left:585px;top:403.2px" width="9" height="9" viewBox="0 0 9 9"><path d="M1 1.5h7v4h-7zM4.5 5.5v2.5M3 8h3" fill="none" stroke="#d0d0d0" stroke-width="0.8"/></svg>
<div class="a" style="left:601px;top:407.2px;width:4px;height:0.8px;background:#aaa"></div>
<div class="a" style="left:607px;top:407.2px;width:54px;height:0.8px;background:#bbb"></div>
<div class="a" style="left:624px;top:404.2px;width:2.2px;height:7px;background:#e8e8e8"></div>
<div class="a" style="left:633.5px;top:405.7px;width:1px;height:3px;background:#999"></div>
<div class="a" style="left:662.5px;top:407.2px;width:4px;height:0.8px;background:#aaa"></div>
<div class="a" style="left:664.1px;top:405.6px;width:0.8px;height:4px;background:#aaa"></div>
<svg style="left:689px;top:402.7px" width="10" height="10" viewBox="0 0 10 10"><path d="M2.5 2.5h5v5h-5zM5 0.5v2M5 7.5v2M0.5 5h2M7.5 5h2" fill="none" stroke="#d0d0d0" stroke-width="0.8"/></svg>
<div class="a" style="left:0;top:412px;width:700px;height:3px;background:#26303c"></div>
<div class="a" style="left:33px;top:412px;width:30px;height:3px;background:#4a5260"></div>
<div class="a" style="left:144px;top:412px;width:31px;height:3px;background:#b8bcc8"></div>
<div class="a" style="left:175px;top:412px;width:110px;height:3px;background:#3a4458"></div>
<div class="t" style="left:7.90px;top:10.59px;font-size:8.2px;line-height:8.2px;color:#e6e6e6;font-family:'Liberation Sans';font-weight:400;transform:scaleX(0.6745)">File</div>
<div class="t" style="left:33.80px;top:10.59px;font-size:8.2px;line-height:8.2px;color:#ffffff;font-family:'Liberation Sans';font-weight:400;transform:scaleX(0.8279)">Slide Master</div>
<div class="t" style="left:85.80px;top:10.59px;font-size:8.2px;line-height:8.2px;color:#e6e6e6;font-family:'Liberation Sans';font-weight:400;transform:scaleX(0.8166)">Home</div>
<div class="t" style="left:118.60px;top:10.59px;font-size:8.2px;line-height:8.2px;color:#e6e6e6;font-family:'Liberation Sans';font-weight:400;transform:scaleX(0.8065)">Insert</div>
<div class="t" style="left:151.20px;top:10.59px;font-size:8.2px;line-height:8.2px;color:#e6e6e6;font-family:'Liberation Sans';font-weight:400;transform:scaleX(0.8122)">Transitions</div>
<div class="t" style="left:198.60px;top:10.59px;font-size:8.2px;line-height:8.2px;color:#e6e6e6;font-family:'Liberation Sans';font-weight:400;transform:scaleX(0.8142)">Animations</div>
<div class="t" style="left:247.50px;top:10.59px;font-size:8.2px;line-height:8.2px;color:#e6e6e6;font-family:'Liberation Sans';font-weight:400;transform:scaleX(0.7612)">Review</div>
<div class="t" style="left:281.80px;top:10.59px;font-size:8.2px;line-height:8.2px;color:#e6e6e6;font-family:'Liberation Sans';font-weight:400;transform:scaleX(0.8199)">View</div>
<div class="t" style="left:310.60px;top:10.59px;font-size:8.2px;line-height:8.2px;color:#e6e6e6;font-family:'Liberation Sans';font-weight:400;transform:scaleX(0.8140)">Developer</div>
<div class="t" style="left:355.70px;top:10.59px;font-size:8.2px;line-height:8.2px;color:#e6e6e6;font-family:'Liberation Sans';font-weight:400;transform:scaleX(0.7984)">Help</div>
<div class="t" style="left:3.90px;top:48.19px;font-size:7.8px;line-height:7.8px;color:#f2f2f2;font-family:'Liberation Sans';font-weight:400;transform:scaleX(0.7629)">Insert Slide</div>
<div class="t" style="left:9.70px;top:57.19px;font-size:7.8px;line-height:7.8px;color:#f2f2f2;font-family:'Liberation Sans';font-weight:400;transform:scaleX(0.7635)">Master</div>
<div class="t" style="left:37.70px;top:48.19px;font-size:7.8px;line-height:7.8px;color:#f2f2f2;font-family:'Liberation Sans';font-weight:400;transform:scaleX(0.7475)">Insert</div>
<div class="t" style="left:36.90px;top:57.19px;font-size:7.8px;line-height:7.8px;color:#f2f2f2;font-family:'Liberation Sans';font-weight:400;transform:scaleX(0.7507)">Layout</div>
<div class="t" style="left:68.00px;top:28.79px;font-size:7.8px;line-height:7.8px;color:#6b6b6b;font-family:'Liberation Sans';font-weight:400;transform:scaleX(0.7522)">Delete</div>
<div class="t" style="left:67.60px;top:42.69px;font-size:7.8px;line-height:7.8px;color:#e6e6e6;font-family:'Liberation Sans';font-weight:400;transform:scaleX(0.7620)">Rename</div>
<div class="t" style="left:68.00px;top:56.69px;font-size:7.8px;line-height:7.8px;color:#6b6b6b;font-family:'Liberation Sans';font-weight:400;transform:scaleX(0.7290)">Preserve</div>
<div class="t" style="left:33.80px;top:71.19px;font-size:7.8px;line-height:7.8px;color:#e2e2e2;font-family:'Liberation Sans';font-weight:400;transform:scaleX(0.7255)">Edit Master</div>
<div class="t" style="left:103.60px;top:47.79px;font-size:7.8px;line-height:7.8px;color:#6b6b6b;font-family:'Liberation Sans';font-weight:400;transform:scaleX(0.7800)">Master</div>
<div class="t" style="left:103.60px;top:57.29px;font-size:7.8px;line-height:7.8px;color:#6b6b6b;font-family:'Liberation Sans';font-weight:400;transform:scaleX(0.7466)">Layout</div>
<div class="t" style="left:135.90px;top:47.79px;font-size:7.8px;line-height:7.8px;color:#f2f2f2;font-family:'Liberation Sans';font-weight:400;transform:scaleX(0.7328)">Insert</div>
<div class="t" style="left:124.90px;top:57.29px;font-size:7.8px;line-height:7.8px;color:#f2f2f2;font-family:'Liberation Sans';font-weight:400;transform:scaleX(0.7840)">Placeholder</div>
<div class="t" style="left:175.10px;top:33.29px;font-size:7.8px;line-height:7.8px;color:#f2f2f2;font-family:'Liberation Sans';font-weight:400;transform:scaleX(0.8083)">Title</div>
<div class="t" style="left:175.10px;top:52.09px;font-size:7.8px;line-height:7.8px;color:#f2f2f2;font-family:'Liberation Sans';font-weight:400;transform:scaleX(0.7424)">Footers</div>
<div class="t" style="left:131.90px;top:71.19px;font-size:7.8px;line-height:7.8px;color:#e2e2e2;font-family:'Liberation Sans';font-weight:400;transform:scaleX(0.7285)">Master Layout</div>
<div class="t" style="left:208.00px;top:48.49px;font-size:7.8px;line-height:7.8px;color:#f2f2f2;font-family:'Liberation Sans';font-weight:400;transform:scaleX(0.7429)">Themes</div>
<div class="t" style="left:204.00px;top:71.19px;font-size:7.8px;line-height:7.8px;color:#e2e2e2;font-family:'Liberation Sans';font-weight:400;transform:scaleX(0.7058)">Edit Theme</div>
<div class="t" style="left:250.00px;top:28.19px;font-size:7.8px;line-height:7.8px;color:#f2f2f2;font-family:'Liberation Sans';font-weight:400;transform:scaleX(0.8174)">Colors</div>
<div class="t" style="left:250.00px;top:41.19px;font-size:7.8px;line-height:7.8px;color:#f2f2f2;font-family:'Liberation Sans';font-weight:400;transform:scaleX(0.8316)">Fonts</div>
<div class="t" style="left:250.00px;top:54.99px;font-size:7.8px;line-height:7.8px;color:#f2f2f2;font-family:'Liberation Sans';font-weight:400;transform:scaleX(0.7271)">Effects</div>
<div class="t" style="left:288.90px;top:28.19px;font-size:7.8px;line-height:7.8px;color:#f2f2f2;font-family:'Liberation Sans';font-weight:400;transform:scaleX(0.7817)">Background Styles</div>
<div class="t" style="left:288.00px;top:41.59px;font-size:7.8px;line-height:7.8px;color:#f2f2f2;font-family:'Liberation Sans';font-weight:400;transform:scaleX(0.7762)">Hide Background Graphics</div>
<div class="t" style="left:280.70px;top:71.19px;font-size:7.8px;line-height:7.8px;color:#e2e2e2;font-family:'Liberation Sans';font-weight:400;transform:scaleX(0.7753)">Background</div>
<div class="t" style="left:376.00px;top:48.49px;font-size:7.8px;line-height:7.8px;color:#f2f2f2;font-family:'Liberation Sans';font-weight:400;transform:scaleX(0.7647)">Slide</div>
<div class="t" style="left:374.50px;top:57.09px;font-size:7.8px;line-height:7.8px;color:#f2f2f2;font-family:'Liberation Sans';font-weight:400;transform:scaleX(0.8091)">Size</div>
<div class="t" style="left:377.00px;top:71.19px;font-size:7.8px;line-height:7.8px;color:#e2e2e2;font-family:'Liberation Sans';font-weight:400;transform:scaleX(0.6877)">Size</div>
<div class="t" style="left:412.00px;top:48.49px;font-size:7.8px;line-height:7.8px;color:#f2f2f2;font-family:'Liberation Sans';font-weight:400;transform:scaleX(0.7552)">Close</div>
<div class="t" style="left:402.70px;top:57.09px;font-size:7.8px;line-height:7.8px;color:#f2f2f2;font-family:'Liberation Sans';font-weight:400;transform:scaleX(0.7722)">Master View</div>
<div class="t" style="left:412.00px;top:71.19px;font-size:7.8px;line-height:7.8px;color:#e2e2e2;font-family:'Liberation Sans';font-weight:400;transform:scaleX(0.7297)">Close</div>
<div class="t" style="left:615.60px;top:10.49px;font-size:7.6px;line-height:7.6px;color:#e8e8e8;font-family:'Liberation Sans';font-weight:400;transform:scaleX(0.8682)">Share</div>
<div class="t" style="left:655.00px;top:10.49px;font-size:7.6px;line-height:7.6px;color:#5c5c5c;font-family:'Liberation Sans';font-weight:400;transform:scaleX(0.8939)">Comments</div>
<div class="t" style="left:3.00px;top:404.49px;font-size:7.6px;line-height:7.6px;color:#e8e8e8;font-family:'Liberation Sans';font-weight:400;transform:scaleX(0.7522)">Slide Master</div>
<div class="t" style="left:673.20px;top:404.08px;font-size:7.2px;line-height:7.2px;color:#e8e8e8;font-family:'Liberation Sans';font-weight:400;transform:scaleX(0.7069)">69%</div>
<div class="t" style="-webkit-text-stroke:0.55px currentColor;left:253.88px;top:177.01px;font-size:37px;line-height:37px;color:#ffffff;font-family:'Liberation Serif';font-weight:400;transform:scaleX(0.8160)">Click</div>
<div class="t" style="-webkit-text-stroke:0.55px currentColor;left:328.60px;top:177.01px;font-size:37px;line-height:37px;color:#ffffff;font-family:'Liberation Serif';font-weight:400;transform:scaleX(0.8345)">to</div>
<div class="t" style="-webkit-text-stroke:0.55px currentColor;left:360.73px;top:177.01px;font-size:37px;line-height:37px;color:#ffffff;font-family:'Liberation Serif';font-weight:400;transform:scaleX(0.8695)">edit</div>
<div class="t" style="-webkit-text-stroke:0.55px currentColor;left:418.30px;top:177.01px;font-size:37px;line-height:37px;color:#ffffff;font-family:'Liberation Serif';font-weight:400;transform:scaleX(0.9032)">Master</div>
<div class="t" style="-webkit-text-stroke:0.55px currentColor;left:520.50px;top:177.01px;font-size:37px;line-height:37px;color:#ffffff;font-family:'Liberation Serif';font-weight:400;transform:scaleX(0.9051)">title</div>
<div class="t" style="-webkit-text-stroke:0.55px currentColor;left:382.62px;top:211.81px;font-size:37px;line-height:37px;color:#ffffff;font-family:'Liberation Serif';font-weight:400;transform:scaleX(0.8764)">style</div>
<div class="t" style="-webkit-text-stroke:0.25px currentColor;left:326.40px;top:256.64px;font-size:14.4px;line-height:14.4px;color:#f4f4f4;font-family:'Liberation Serif';font-weight:400;transform:scaleX(0.8036)">Click</div>
<div class="t" style="-webkit-text-stroke:0.25px currentColor;left:355.70px;top:256.64px;font-size:14.4px;line-height:14.4px;color:#f4f4f4;font-family:'Liberation Serif';font-weight:400;transform:scaleX(0.9092)">to</div>
<div class="t" style="-webkit-text-stroke:0.25px currentColor;left:369.30px;top:256.64px;font-size:14.4px;line-height:14.4px;color:#f4f4f4;font-family:'Liberation Serif';font-weight:400;transform:scaleX(0.8943)">edit</div>
<div class="t" style="-webkit-text-stroke:0.25px currentColor;left:392.10px;top:256.64px;font-size:14.4px;line-height:14.4px;color:#f4f4f4;font-family:'Liberation Serif';font-weight:400;transform:scaleX(0.9087)">Master</div>
<div class="t" style="-webkit-text-stroke:0.25px currentColor;left:432.90px;top:256.64px;font-size:14.4px;line-height:14.4px;color:#f4f4f4;font-family:'Liberation Serif';font-weight:400;transform:scaleX(0.9337)">subtitle</div>
<div class="t" style="-webkit-text-stroke:0.25px currentColor;left:476.00px;top:256.64px;font-size:14.4px;line-height:14.4px;color:#f4f4f4;font-family:'Liberation Serif';font-weight:400;transform:scaleX(0.8958)">style</div>
<div class="t" style="-webkit-text-stroke:0.08px currentColor;left:222.00px;top:377.86px;font-size:6.5px;line-height:6.5px;color:#f0f0f0;font-family:'Liberation Serif';font-weight:400;transform:scaleX(0.9383)">6/28/2021</div>
<div class="t" style="-webkit-text-stroke:0.08px currentColor;left:405.00px;top:377.86px;font-size:6.5px;line-height:6.5px;color:#f0f0f0;font-family:'Liberation Serif';font-weight:400;transform:scaleX(0.8986)">Footer</div>
<div class="t" style="left:206.60px;top:82.49px;font-size:7.6px;line-height:7.6px;color:#e8e8e8;font-family:'Liberation Sans';font-weight:400;transform:scaleX(0.8500)">6</div>
<div class="t" style="left:240.80px;top:82.49px;font-size:7.6px;line-height:7.6px;color:#e8e8e8;font-family:'Liberation Sans';font-weight:400;transform:scaleX(0.8500)">5</div>
<div class="t" style="left:275.00px;top:82.49px;font-size:7.6px;line-height:7.6px;color:#e8e8e8;font-family:'Liberation Sans';font-weight:400;transform:scaleX(0.8500)">4</div>
<div class="t" style="left:309.20px;top:82.49px;font-size:7.6px;line-height:7.6px;color:#e8e8e8;font-family:'Liberation Sans';font-weight:400;transform:scaleX(0.8500)">3</div>
<div class="t" style="left:343.40px;top:82.49px;font-size:7.6px;line-height:7.6px;color:#e8e8e8;font-family:'Liberation Sans';font-weight:400;transform:scaleX(0.8500)">2</div>
<div class="t" style="left:377.60px;top:82.49px;font-size:7.6px;line-height:7.6px;color:#e8e8e8;font-family:'Liberation Sans';font-weight:400;transform:scaleX(0.8500)">1</div>
<div class="t" style="left:411.80px;top:82.49px;font-size:7.6px;line-height:7.6px;color:#e8e8e8;font-family:'Liberation Sans';font-weight:400;transform:scaleX(0.8500)">0</div>
<div class="t" style="left:446.00px;top:82.49px;font-size:7.6px;line-height:7.6px;color:#e8e8e8;font-family:'Liberation Sans';font-weight:400;transform:scaleX(0.8500)">1</div>
<div class="t" style="left:480.20px;top:82.49px;font-size:7.6px;line-height:7.6px;color:#e8e8e8;font-family:'Liberation Sans';font-weight:400;transform:scaleX(0.8500)">2</div>
<div class="t" style="left:514.40px;top:82.49px;font-size:7.6px;line-height:7.6px;color:#e8e8e8;font-family:'Liberation Sans';font-weight:400;transform:scaleX(0.8500)">3</div>
<div class="t" style="left:548.60px;top:82.49px;font-size:7.6px;line-height:7.6px;color:#e8e8e8;font-family:'Liberation Sans';font-weight:400;transform:scaleX(0.8500)">4</div>
<div class="t" style="left:582.80px;top:82.49px;font-size:7.6px;line-height:7.6px;color:#e8e8e8;font-family:'Liberation Sans';font-weight:400;transform:scaleX(0.8500)">5</div>
<div class="t" style="left:617.00px;top:82.49px;font-size:7.6px;line-height:7.6px;color:#e8e8e8;font-family:'Liberation Sans';font-weight:400;transform:scaleX(0.8500)">6</div>
<div class="t n" style="-webkit-text-stroke:0.3px currentColor;left:42.60px;top:102.96px;font-size:6px;line-height:6px;color:#f4f4f4;font-family:'Liberation Serif';font-weight:400;transform:scaleX(0.7764)">Click to edit Master title</div>
<div class="t n" style="-webkit-text-stroke:0.3px currentColor;left:61.00px;top:107.56px;font-size:6px;line-height:6px;color:#f4f4f4;font-family:'Liberation Serif';font-weight:400;transform:scaleX(0.7970)">style</div>
<div class="t n" style="left:52.90px;top:113.53px;font-size:3.5px;line-height:3.5px;color:#f0f4f8;font-family:'Liberation Serif';font-weight:400;transform:scaleX(0.5233)">Click to edit Master subtitle style</div>
<div class="t n" style="-webkit-text-stroke:0.08px currentColor;left:38.80px;top:149.56px;font-size:6px;line-height:6px;color:#3a3a3a;font-family:'Liberation Serif';font-weight:400;transform:scaleX(0.5639)">Click to edit Master title style</div>
<div class="t n" style="left:39.50px;top:157.03px;font-size:3.5px;line-height:3.5px;color:#3a3a3a;font-family:'Liberation Serif';font-weight:400;transform:scaleX(0.6160)">Click to edit Master text styles</div>
<div class="t n" style="left:41.70px;top:159.88px;font-size:3px;line-height:3px;color:#555;font-family:'Liberation Serif';font-weight:400;transform:scaleX(0.5970)">Second level</div>
<div class="t n" style="left:43.90px;top:162.38px;font-size:3px;line-height:3px;color:#555;font-family:'Liberation Serif';font-weight:400;transform:scaleX(0.4847)">Third level</div>
<div class="t n" style="left:47.50px;top:164.98px;font-size:3px;line-height:3px;color:#666;font-family:'Liberation Serif';font-weight:400;transform:scaleX(0.6849)">Fourth level</div>
<div class="t n" style="left:48.90px;top:167.08px;font-size:3px;line-height:3px;color:#666;font-family:'Liberation Serif';font-weight:400;transform:scaleX(0.4610)">Fifth level</div>
<div class="t n" style="-webkit-text-stroke:0.08px currentColor;left:38.80px;top:217.66px;font-size:6px;line-height:6px;color:#3a3a3a;font-family:'Liberation Serif';font-weight:400;transform:scaleX(0.7611)">Click to edit Master title</div>
<div class="t n" style="-webkit-text-stroke:0.08px currentColor;left:38.80px;top:222.46px;font-size:6px;line-height:6px;color:#3a3a3a;font-family:'Liberation Serif';font-weight:400;transform:scaleX(0.7027)">style</div>
<div class="t n" style="left:38.50px;top:229.38px;font-size:3px;line-height:3px;color:#777;font-family:'Liberation Serif';font-weight:400;transform:scaleX(0.5545)">Click to edit Master subtitle style</div>
<div class="t n" style="-webkit-text-stroke:0.08px currentColor;left:38.80px;top:258.16px;font-size:6px;line-height:6px;color:#3a3a3a;font-family:'Liberation Serif';font-weight:400;transform:scaleX(0.5639)">Click to edit Master title style</div>
<div class="t n" style="left:40.30px;top:265.88px;font-size:3.6px;line-height:3.6px;color:#3a3a3a;font-family:'Liberation Serif';font-weight:400;transform:scaleX(0.5983)">Click to edit Master text</div>
<div class="t n" style="left:40.30px;top:268.48px;font-size:3.6px;line-height:3.6px;color:#3a3a3a;font-family:'Liberation Serif';font-weight:400;transform:scaleX(0.7625)">styles</div>
<div class="t n" style="left:42.00px;top:270.88px;font-size:3px;line-height:3px;color:#555;font-family:'Liberation Serif';font-weight:400;transform:scaleX(0.6419)">Second level</div>
<div class="t n" style="left:44.00px;top:273.08px;font-size:3px;line-height:3px;color:#555;font-family:'Liberation Serif';font-weight:400;transform:scaleX(0.5219)">Third level</div>
<div class="t n" style="left:46.00px;top:275.28px;font-size:3px;line-height:3px;color:#666;font-family:'Liberation Serif';font-weight:400;transform:scaleX(0.6103)">Fourth level</div>
<div class="t n" style="left:68.80px;top:265.88px;font-size:3.6px;line-height:3.6px;color:#3a3a3a;font-family:'Liberation Serif';font-weight:400;transform:scaleX(0.5983)">Click to edit Master text</div>
<div class="t n" style="left:68.80px;top:268.48px;font-size:3.6px;line-height:3.6px;color:#3a3a3a;font-family:'Liberation Serif';font-weight:400;transform:scaleX(0.7625)">styles</div>
<div class="t n" style="left:70.50px;top:270.88px;font-size:3px;line-height:3px;color:#555;font-family:'Liberation Serif';font-weight:400;transform:scaleX(0.6419)">Second level</div>
<div class="t n" style="left:72.50px;top:273.08px;font-size:3px;line-height:3px;color:#555;font-family:'Liberation Serif';font-weight:400;transform:scaleX(0.5219)">Third level</div>
<div class="t n" style="left:74.50px;top:275.28px;font-size:3px;line-height:3px;color:#666;font-family:'Liberation Serif';font-weight:400;transform:scaleX(0.6103)">Fourth level</div>
<div class="t n" style="-webkit-text-stroke:0.08px currentColor;left:38.80px;top:312.36px;font-size:6px;line-height:6px;color:#3a3a3a;font-family:'Liberation Serif';font-weight:400;transform:scaleX(0.5639)">Click to edit Master title style</div>
<div class="t n" style="left:38.50px;top:321.68px;font-size:3px;line-height:3px;color:#666;font-family:'Liberation Serif';font-weight:400;transform:scaleX(0.6520)">Click to edit Master text styles</div>
<div class="t n" style="left:40.30px;top:322.88px;font-size:3.6px;line-height:3.6px;color:#3a3a3a;font-family:'Liberation Serif';font-weight:400;transform:scaleX(0.5983)">Click to edit Master text</div>
<div class="t n" style="left:40.30px;top:325.48px;font-size:3.6px;line-height:3.6px;color:#3a3a3a;font-family:'Liberation Serif';font-weight:400;transform:scaleX(0.7625)">styles</div>
<div class="t n" style="left:42.00px;top:327.88px;font-size:3px;line-height:3px;color:#555;font-family:'Liberation Serif';font-weight:400;transform:scaleX(0.6419)">Second level</div>
<div class="t n" style="left:44.00px;top:330.08px;font-size:3px;line-height:3px;color:#555;font-family:'Liberation Serif';font-weight:400;transform:scaleX(0.5219)">Third level</div>
<div class="t n" style="left:46.00px;top:332.28px;font-size:3px;line-height:3px;color:#666;font-family:'Liberation Serif';font-weight:400;transform:scaleX(0.6103)">Fourth level</div>
<div class="t n" style="left:67.00px;top:321.68px;font-size:3px;line-height:3px;color:#666;font-family:'Liberation Serif';font-weight:400;transform:scaleX(0.6520)">Click to edit Master text styles</div>
<div class="t n" style="left:68.80px;top:322.88px;font-size:3.6px;line-height:3.6px;color:#3a3a3a;font-family:'Liberation Serif';font-weight:400;transform:scaleX(0.5983)">Click to edit Master text</div>
<div class="t n" style="left:68.80px;top:325.48px;font-size:3.6px;line-height:3.6px;color:#3a3a3a;font-family:'Liberation Serif';font-weight:400;transform:scaleX(0.7625)">styles</div>
<div class="t n" style="left:70.50px;top:327.88px;font-size:3px;line-height:3px;color:#555;font-family:'Liberation Serif';font-weight:400;transform:scaleX(0.6419)">Second level</div>
<div class="t n" style="left:72.50px;top:330.08px;font-size:3px;line-height:3px;color:#555;font-family:'Liberation Serif';font-weight:400;transform:scaleX(0.5219)">Third level</div>
<div class="t n" style="left:74.50px;top:332.28px;font-size:3px;line-height:3px;color:#666;font-family:'Liberation Serif';font-weight:400;transform:scaleX(0.6103)">Fourth level</div>
<div class="t n" style="-webkit-text-stroke:0.08px currentColor;left:38.80px;top:366.76px;font-size:6px;line-height:6px;color:#3a3a3a;font-family:'Liberation Serif';font-weight:400;transform:scaleX(0.5639)">Click to edit Master title style</div>
<svg style="left:0;top:0;filter:drop-shadow(0.8px 0.8px 0.7px rgba(0,0,0,0.45))" width="700" height="415" viewBox="0 0 700 415"><line x1="65.65" y1="30.75" x2="82.5" y2="57" stroke="#e81010" stroke-width="4.4" stroke-linecap="butt"/><polygon points="59.2,20.5 59.3,35 72,26.5" fill="#e81010"/><line x1="272.4" y1="62.25" x2="280.2" y2="101.8" stroke="#e81010" stroke-width="4.2" stroke-linecap="butt"/><polygon points="268.3,45.7 266.3,63.5 278.5,61" fill="#e81010"/><line x1="356.70000000000005" y1="26.75" x2="399.5" y2="13.4" stroke="#e81010" stroke-width="4.6" stroke-linecap="butt"/><polygon points="342,31.3 354.6,20.5 358.8,33" fill="#e81010"/><line x1="438.9" y1="39.0" x2="519.5" y2="55.6" stroke="#e81010" stroke-width="4.6" stroke-linecap="butt"/><polygon points="423.4,36.7 438.3,32.5 439.5,45.5" fill="#e81010"/><line x1="105.8" y1="108.3" x2="165.5" y2="123.3" stroke="#e81010" stroke-width="4.4" stroke-linecap="butt"/><polygon points="91.5,105.4 105.8,101.8 105.8,114.8" fill="#e81010"/></svg></body></html>
